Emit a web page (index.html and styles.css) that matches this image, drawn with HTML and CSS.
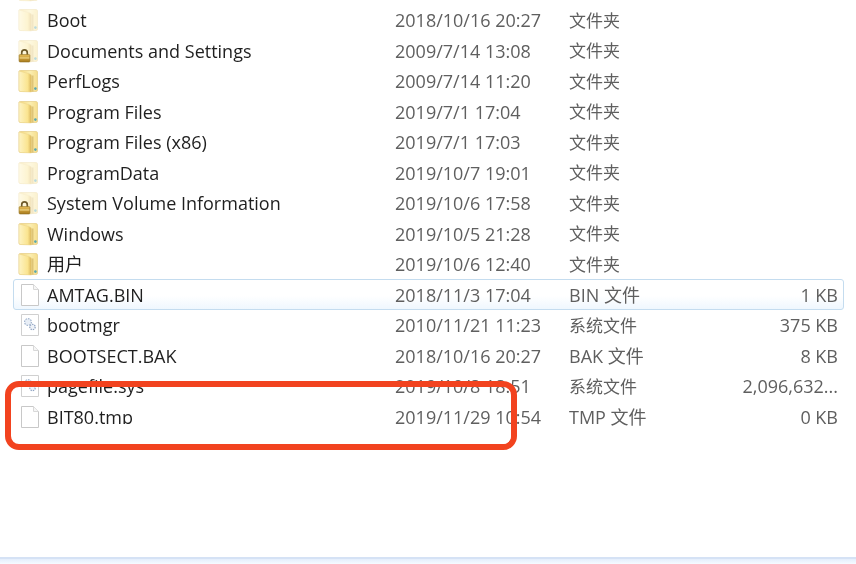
FILE: index.html
```html
<!DOCTYPE html>
<html lang="zh-CN">
<head>
<meta charset="utf-8">
<title>本地磁盘</title>
<link rel="stylesheet" href="styles.css">
</head>
<body>
<svg class="defs" width="0" height="0" aria-hidden="true">
  <defs>
    <linearGradient id="fb" x1="0" y1="0" x2="1" y2="0"><stop offset="0" stop-color="#f3d678"/><stop offset=".6" stop-color="#fbeeb0"/><stop offset="1" stop-color="#f5dd8c"/></linearGradient>
    <linearGradient id="ff" x1="0" y1="0" x2="1" y2="0"><stop offset="0" stop-color="#fdf3c4"/><stop offset=".7" stop-color="#fae48f"/><stop offset="1" stop-color="#d9b458"/></linearGradient>
    <linearGradient id="lk" x1="0" y1="0" x2="0" y2="1"><stop offset="0" stop-color="#e8bf58"/><stop offset="1" stop-color="#a87a1c"/></linearGradient>
    <symbol id="folder" viewBox="0 0 22 24">
      <path d="M2 2.5 Q2 1.5 3.5 1.5 H19 Q20.5 1.5 20.5 3 V21 Q20.5 22.5 19 22.5 H3.5 Q2 22.5 2 21 Z" fill="url(#fb)" stroke="#e3c878" stroke-width=".6"/>
      <path d="M2 2 L13 5 Q14.5 5.5 14.5 7 V23 L3.5 22.5 Q2 22.4 2 21 Z" fill="url(#ff)" stroke="#ead28a" stroke-width=".5"/>
      <path d="M14.8 6.5 H16.5 V22.5 H14.8 Z" fill="#c9a650" opacity=".55"/>
      <circle cx="18.4" cy="19.6" r="1.3" fill="#58a8b0"/>
    </symbol>
    <symbol id="lock" viewBox="0 0 14 15">
      <path d="M4 7 V4.5 a3 3 0 0 1 6 0 V7" fill="none" stroke="#6e5a2a" stroke-width="1.8"/>
      <rect x="1.2" y="6.5" width="11.6" height="8" rx="1" fill="url(#lk)" stroke="#8a6a20" stroke-width=".6"/>
      <rect x="1.8" y="9.6" width="10.4" height="1.1" fill="#f4dc90"/>
    </symbol>
    <symbol id="file" viewBox="0 0 20 22">
      <path d="M1.5 .5 H13.5 L18.5 5.5 V21.5 H1.5 Z" fill="#fff" stroke="#c8c8c8"/>
      <path d="M13.5 .5 V5.5 H18.5" fill="#f6f6f6" stroke="#d8d8d8"/>
    </symbol>
    <symbol id="sys" viewBox="0 0 20 22">
      <path d="M1.5 .5 H18.5 V21.5 H1.5 Z" fill="#fff" stroke="#d0d0d0"/>
      <circle cx="8" cy="8" r="3.4" fill="#e8eef6" stroke="#9fb2cc" stroke-width="1.2" stroke-dasharray="1.6 1"/>
      <circle cx="12.5" cy="13" r="2.7" fill="#eef2f8" stroke="#8ea2c0" stroke-width="1.2" stroke-dasharray="1.4 1"/>
    </symbol>
  </defs>
</svg>

<main class="window">
  <div class="list">
    <div class="row row-cut"><span class="icon"><svg class="ico faded"><use href="#folder"/></svg></span></div>

    <div class="row"><span class="icon"><svg class="ico faded"><use href="#folder"/></svg></span><span class="name">Boot</span><span class="date">2018/10/16 20:27</span><span class="type cjk">文件夹</span><span class="size"></span></div>
    <div class="row"><span class="icon"><svg class="ico faded"><use href="#folder"/></svg><svg class="lock"><use href="#lock"/></svg></span><span class="name">Documents and Settings</span><span class="date">2009/7/14 13:08</span><span class="type cjk">文件夹</span><span class="size"></span></div>
    <div class="row"><span class="icon"><svg class="ico"><use href="#folder"/></svg></span><span class="name">PerfLogs</span><span class="date">2009/7/14 11:20</span><span class="type cjk">文件夹</span><span class="size"></span></div>
    <div class="row"><span class="icon"><svg class="ico"><use href="#folder"/></svg></span><span class="name">Program Files</span><span class="date">2019/7/1 17:04</span><span class="type cjk">文件夹</span><span class="size"></span></div>
    <div class="row"><span class="icon"><svg class="ico"><use href="#folder"/></svg></span><span class="name">Program Files (x86)</span><span class="date">2019/7/1 17:03</span><span class="type cjk">文件夹</span><span class="size"></span></div>
    <div class="row"><span class="icon"><svg class="ico faded"><use href="#folder"/></svg></span><span class="name">ProgramData</span><span class="date">2019/10/7 19:01</span><span class="type cjk">文件夹</span><span class="size"></span></div>
    <div class="row"><span class="icon"><svg class="ico faded"><use href="#folder"/></svg><svg class="lock"><use href="#lock"/></svg></span><span class="name">System Volume Information</span><span class="date">2019/10/6 17:58</span><span class="type cjk">文件夹</span><span class="size"></span></div>
    <div class="row"><span class="icon"><svg class="ico"><use href="#folder"/></svg></span><span class="name">Windows</span><span class="date">2019/10/5 21:28</span><span class="type cjk">文件夹</span><span class="size"></span></div>
    <div class="row"><span class="icon"><svg class="ico"><use href="#folder"/></svg></span><span class="name">用户</span><span class="date">2019/10/6 12:40</span><span class="type cjk">文件夹</span><span class="size"></span></div>

    <div class="row selected"><span class="icon"><svg class="ico-doc"><use href="#file"/></svg></span><span class="name">AMTAG.BIN</span><span class="date">2018/11/3 17:04</span><span class="type">BIN 文件</span><span class="size">1 KB</span></div>
    <div class="row"><span class="icon"><svg class="ico-doc"><use href="#sys"/></svg></span><span class="name">bootmgr</span><span class="date">2010/11/21 11:23</span><span class="type cjk">系统文件</span><span class="size">375 KB</span></div>
    <div class="row"><span class="icon"><svg class="ico-doc"><use href="#file"/></svg></span><span class="name">BOOTSECT.BAK</span><span class="date">2018/10/16 20:27</span><span class="type">BAK 文件</span><span class="size">8 KB</span></div>
    <div class="row"><span class="icon"><svg class="ico-doc"><use href="#sys"/></svg></span><span class="name">pagefile.sys</span><span class="date">2019/10/8 18:51</span><span class="type cjk">系统文件</span><span class="size">2,096,632...</span></div>
    <div class="row"><span class="icon"><svg class="ico-doc"><use href="#file"/></svg></span><span class="name">BIT80.tmp</span><span class="date">2019/11/29 10:54</span><span class="type">TMP 文件</span><span class="size">0 KB</span></div>
  </div>

  <div class="annotation"><div class="erase"></div></div>
  <div class="statusbar"></div>
</main>
</body>
</html>
```
FILE: styles.css
```css
* { box-sizing: border-box; }

html, body {
  margin: 0;
  height: 100%;
  background: #fff;
}

.defs { position: absolute; }

.window {
  position: relative;
  width: 856px;
  height: 564px;
  overflow: hidden;
  display: flex;
  flex-direction: column;
  background: #fff;
  font-family: "Open Sans", "Noto Sans CJK SC", sans-serif;
  font-size: 18px;
}

.list {
  flex: 1;
  padding: 4.75px 12px 0 13px;
}

.row {
  display: grid;
  grid-template-columns: 33px 348px 174px 100px 1fr;
  align-items: center;
  height: 30.5px;
  padding-right: 5px;
  border: 1px solid transparent;
  border-radius: 3px;
  line-height: 1;
  white-space: nowrap;
  filter: blur(.35px);
}

.row-cut { margin-top: -30.5px; }

.selected {
  border-color: #c4dcef;
  background: linear-gradient(#fff 55%, #eff7fe);
}

.icon {
  position: relative;
  display: block;
  width: 24px;
  height: 24px;
  margin-left: 3px;
}

.ico {
  display: block;
  width: 22px;
  height: 24px;
}

.ico-doc {
  display: block;
  width: 20px;
  height: 22px;
  margin: 1px 0 0 3px;
}

.faded { opacity: .42; }

.lock {
  position: absolute;
  left: 1px;
  bottom: 0;
  width: 13px;
  height: 15px;
}

.name { color: #1f1f1f; }

.date, .type, .size { color: #5f5f5f; }

.cjk { font-size: 17px; }

.size { text-align: right; }

.annotation {
  position: absolute;
  left: 5px;
  top: 381px;
  width: 512px;
  height: 69px;
  border: 6px solid #f2431f;
  border-radius: 14px;
}

.erase {
  position: absolute;
  left: 29px;
  right: 0;
  top: 37px;
  bottom: 0;
  background: #fff;
  border-radius: 0 0 8px 0;
}

.statusbar {
  height: 7px;
  border-top: 2px solid #d5e2f5;
  background: linear-gradient(#e4eefc, #f6faff);
}
```
